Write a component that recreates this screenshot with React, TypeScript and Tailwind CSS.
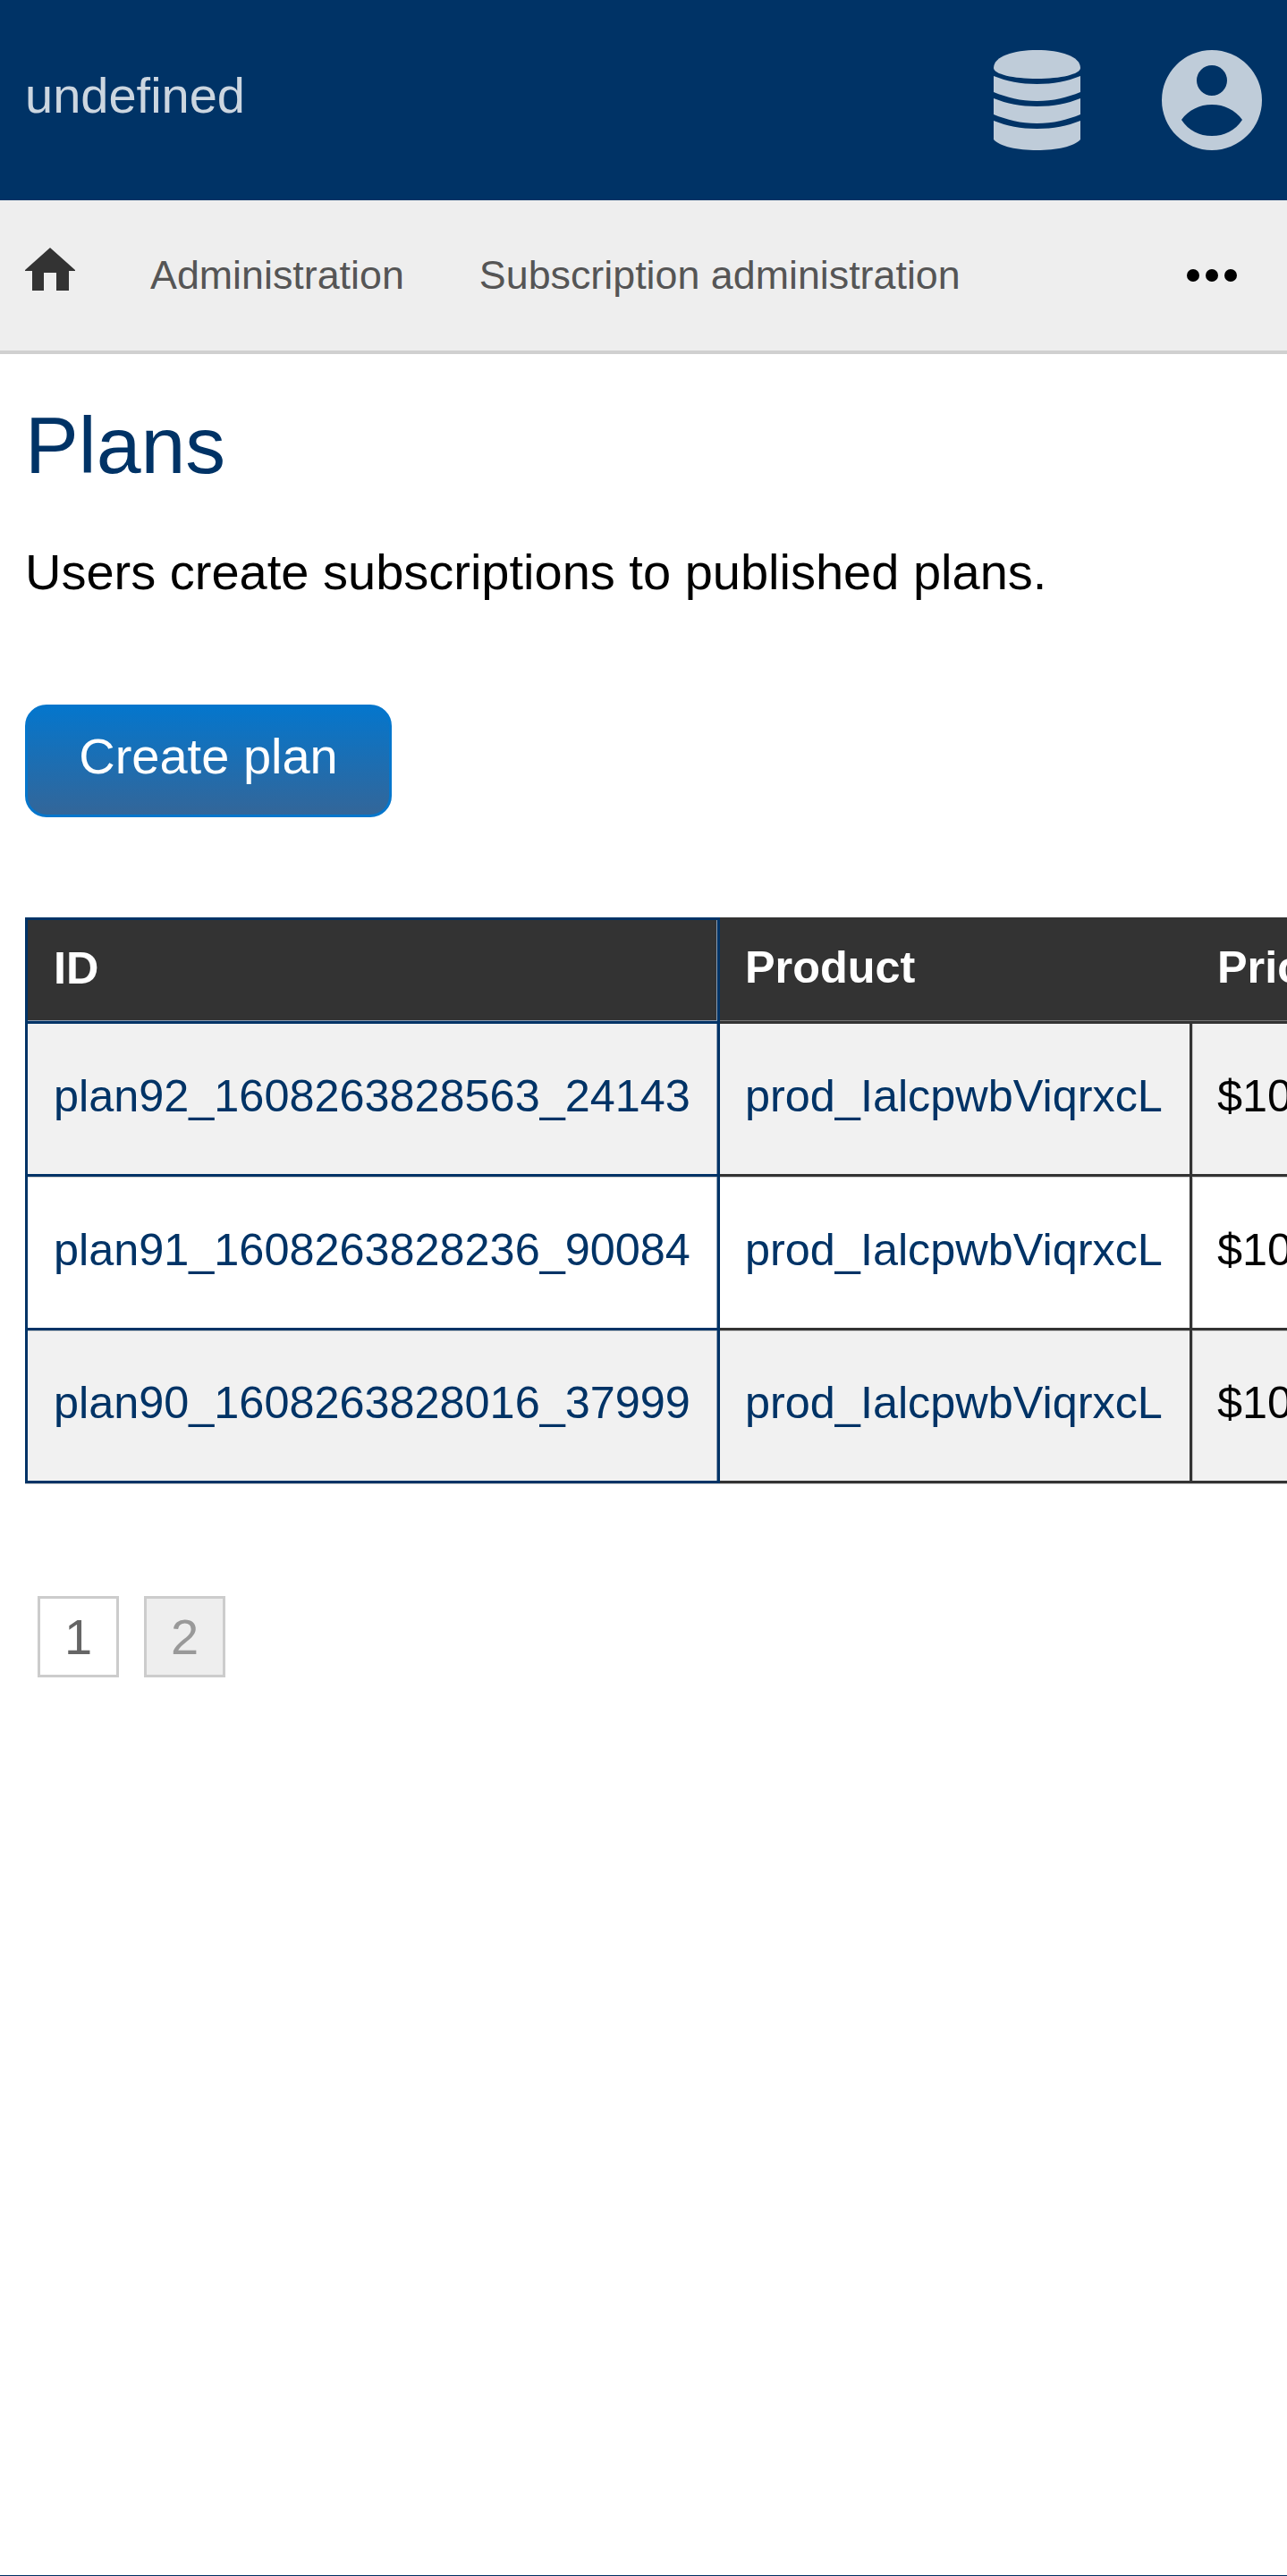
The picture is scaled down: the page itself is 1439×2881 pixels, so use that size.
const plans = [
  { id: 'plan92_1608263828563_24143', product: 'prod_IalcpwbViqrxcL', price: '$10.00', bg: 'bg-[#f1f1f1]', first: 'shadow-[inset_-1px_0_0_#8a9bb0]', second: '', third: 'shadow-[inset_1px_0_0_#ccc]' },
  { id: 'plan91_1608263828236_90084', product: 'prod_IalcpwbViqrxcL', price: '$10.00', bg: 'bg-white', first: 'shadow-[inset_-1px_0_0_#8a9bb0,inset_0_1px_0_#ccc]', second: 'shadow-[inset_0_1px_0_#ccc]', third: 'shadow-[inset_1px_1px_0_#ccc]' },
  { id: 'plan90_1608263828016_37999', product: 'prod_IalcpwbViqrxcL', price: '$10.00', bg: 'bg-[#f1f1f1]', first: 'shadow-[inset_-1px_0_0_#8a9bb0,inset_0_1px_0_#ccc]', second: 'shadow-[inset_0_1px_0_#ccc]', third: 'shadow-[inset_1px_1px_0_#ccc]' },
];

const HomeIcon = () => (
  <svg viewBox="0 0 56 48" className="mb-[14px] h-[48px] w-[56px] shrink-0 fill-[#333]">
    <path d="M28 0L56 25V26H49V48H35V28H21V48H8V26H0V25Z" />
  </svg>
);

const DatabaseIcon = () => (
  <svg viewBox="0 0 97 112" className="h-[112px] w-[97px] fill-[#bfccd9]">
    <path d="M48.5 0C75 0 97 7 97 20C97 27 75 32 48.5 32C22 32 0 27 0 20C0 7 22 0 48.5 0Z" />
    <path d="M0 29C15 35 30 38 48.5 38C67 38 82 35 97 29V47C82 53 67 57 48.5 57C30 57 15 53 0 47Z" />
    <path d="M0 54C15 60 30 63 48.5 63C67 63 82 60 97 54V72C82 78 67 82 48.5 82C30 82 15 78 0 72Z" />
    <path d="M0 79C15 85 30 88 48.5 88C67 88 82 85 97 79V100C90 108 70 112 48.5 112C27 112 7 108 0 100Z" />
  </svg>
);

const UserIcon = () => (
  <svg viewBox="0 0 112 112" className="h-[112px] w-[112px] fill-[#bfccd9]">
    <path
      fillRule="evenodd"
      d="M56 0A56 56 0 1 1 56 112A56 56 0 1 1 56 0ZM56 17A17 17 0 1 0 56 51A17 17 0 1 0 56 17ZM22 78C30 67 42 61 56 61C70 61 82 67 90 78C82 90 70 96 56 96C42 96 30 90 22 78Z"
    />
  </svg>
);

export default function App() {
  return (
    <div className="flex min-h-[2881px] flex-col overflow-hidden border-b border-b-[#036] bg-white font-['Liberation_Sans',Arial,sans-serif]">
      <header className="flex h-[224px] items-center justify-between bg-[#036] px-[28px]">
        <span className="pb-[11px] text-[56px] text-[#ccd6e0]">undefined</span>
        <div className="flex items-center gap-[91px]">
          <DatabaseIcon />
          <UserIcon />
        </div>
      </header>

      <nav className="flex h-[172px] items-center border-b-[4px] border-b-[#d0d0d0] bg-[#eee] pl-[28px] pr-[56px] text-[44.8px] text-[#555]">
        <HomeIcon />
        <span className="ml-[84px]">Administration</span>
        <span className="ml-[84px]">Subscription administration</span>
        <span className="ml-auto flex gap-[7px]">
          <i className="size-[14px] rounded-full bg-black" />
          <i className="size-[14px] rounded-full bg-black" />
          <i className="size-[14px] rounded-full bg-black" />
        </span>
      </nav>

      <main className="pl-[28px]">
        <h1 className="mt-[46px] text-[89.6px] leading-[112px] text-[#036]">Plans</h1>
        <p className="mt-[44px] text-[56px] leading-[84px] text-black">Users create subscriptions to published plans.</p>

        <button className="mt-[106px] block h-[126px] w-[410px] rounded-[24px] border-[3px] border-[#0576cc] bg-linear-to-b/srgb from-[#0576cc] to-[#336699] pb-[10px] text-[56px] text-white">
          Create plan
        </button>

        <table className="mt-[112px] w-[1705px] table-fixed border-separate border-spacing-0 text-[50.4px] shadow-[0_1px_0_#ccc]">
          <thead>
            <tr className="bg-[#333] text-left font-bold text-white">
              <th className="h-[119px] w-[777px] border-x-[3px] border-y-[3px] border-[#036] pb-[5px] pl-[29px] shadow-[inset_-1px_-1px_0_#8a9bb0]">ID</th>
              <th className="h-[119px] w-[528px] border-b-[3px] border-b-[#333] pb-[5px] pl-[28px] shadow-[inset_0_-1px_0_#777]">Product</th>
              <th className="h-[119px] w-[400px] border-b-[3px] border-b-[#333] pb-[5px] pl-[28px] shadow-[inset_0_-1px_0_#777]">Price</th>
            </tr>
          </thead>
          <tbody>
            {plans.map((plan) => (
              <tr key={plan.id} className={plan.bg}>
                <td className={`h-[171.4px] border-x-[3px] border-b-[3px] border-[#036] pb-[6px] pl-[29px] text-[#036] ${plan.first}`}>{plan.id}</td>
                <td className={`h-[171.4px] border-r-[3px] border-b-[3px] border-[#333] pb-[6px] pl-[28px] text-[#036] ${plan.second}`}>{plan.product}</td>
                <td className={`h-[171.4px] border-r-[3px] border-b-[3px] border-[#333] pb-[6px] pl-[28px] text-black ${plan.third}`}>{plan.price}</td>
              </tr>
            ))}
          </tbody>
        </table>

        <div className="mt-[126px] flex gap-[28px] pl-[14px] text-[56px]">
          <span className="flex size-[91px] items-center justify-center border-[3px] border-[#ccc] text-[#666]">1</span>
          <span className="flex size-[91px] items-center justify-center border-[3px] border-[#ccc] bg-[#eee] text-[#999]">2</span>
        </div>
      </main>
    </div>
  );
}
